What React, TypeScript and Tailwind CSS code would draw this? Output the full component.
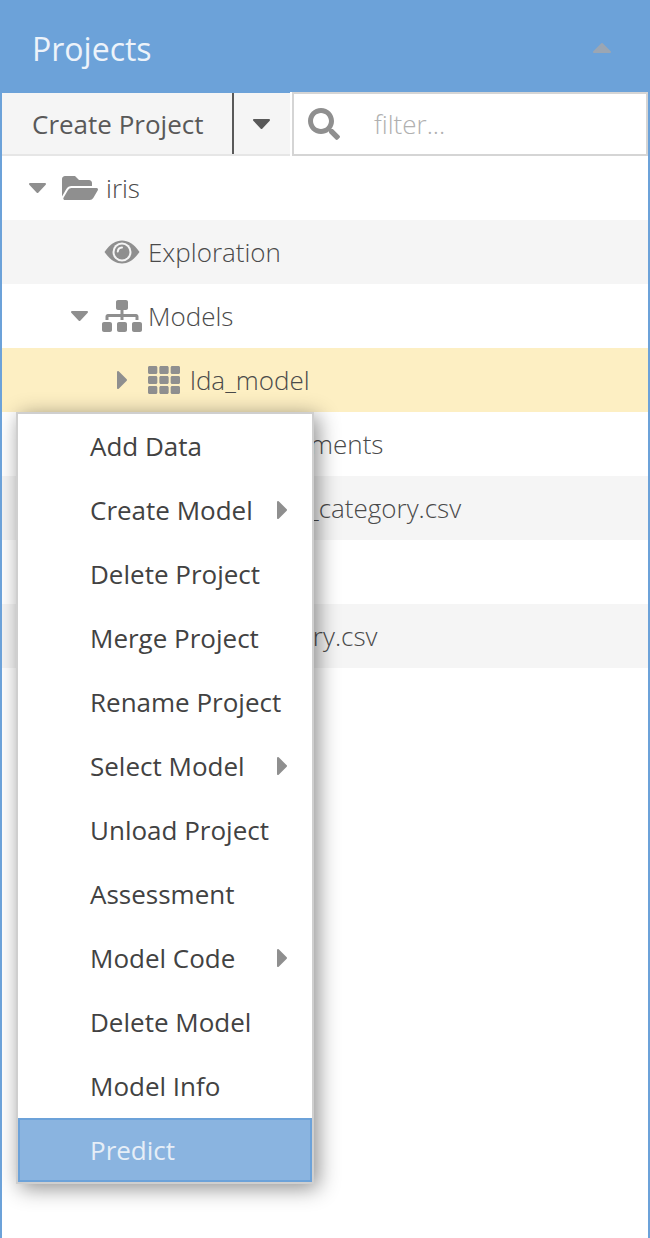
import React from "react";
import { FaFolderOpen, FaSearch, FaSitemap, FaTh } from "react-icons/fa";

function CaretDown({ className }: { className?: string }) {
  return (
    <svg width="19" height="12" viewBox="0 0 19 12" className={`shrink-0 ${className ?? ""}`}>
      <polygon points="2,2 17,2 9.5,10" fill="currentColor" stroke="currentColor" strokeWidth="2" strokeLinejoin="round" />
    </svg>
  );
}

function CaretRight({ className }: { className?: string }) {
  return (
    <svg width="12" height="20" viewBox="0 0 12 20" className={`shrink-0 ${className ?? ""}`}>
      <polygon points="2,2 10,10 2,18" fill="currentColor" stroke="currentColor" strokeWidth="2" strokeLinejoin="round" />
    </svg>
  );
}

// solid almond with a ringed pupil, the package eye is drawn differently
function EyeIcon({ className }: { className?: string }) {
  return (
    <svg width="36" height="24" viewBox="0 0 36 24" className={`shrink-0 ${className ?? ""}`}>
      <path d="M0.5 12C6 4 12 0.5 18 0.5S30 4 35.500 12C30 20 24 23.500 18 23.500S6 20 0.5 12Z" fill="currentColor" />
      <circle cx="18" cy="12" r="9.5" fill="#f5f5f5" />
      <circle cx="18" cy="12" r="7.5" fill="currentColor" />
      <path d="M13.800 11.500A4.500 4.500 0 0 1 18 7.500" fill="none" stroke="#f5f5f5" strokeWidth="2" strokeLinecap="round" />
    </svg>
  );
}

function TreeRow({
  pad,
  active,
  striped,
  children,
}: {
  pad: string;
  active?: boolean;
  striped?: boolean;
  children?: React.ReactNode;
}) {
  return (
    <div
      className={`flex h-16 items-center whitespace-nowrap text-[26px] font-light text-[#4a4a4a] ${pad} ${
        active ? "bg-[#fdefc3]" : striped ? "bg-[#f5f5f5]" : "bg-white"
      }`}
    >
      {children}
    </div>
  );
}

const menuItems = [
  { label: "Add Data" },
  { label: "Create Model", sub: true },
  { label: "Delete Project" },
  { label: "Merge Project" },
  { label: "Rename Project" },
  { label: "Select Model", sub: true },
  { label: "Unload Project" },
  { label: "Assessment" },
  { label: "Model Code", sub: true },
  { label: "Delete Model" },
  { label: "Model Info" },
];

export default function App() {
  return (
    <div className="relative h-[1238px] w-[650px] overflow-hidden border-x-2 border-[#6ca2d9] bg-white font-['Open_Sans',sans-serif]">
      {/* panel header */}
      <div className="flex h-[92px] items-center justify-between bg-[#6ca2d9] pl-[30px] pr-9">
        <span className="mt-[5px] text-[32px] text-[#edf3fa]">Projects</span>
        <svg width="20" height="12" viewBox="0 0 20 12" className="mt-1 text-[#9ba6b3]">
          <polygon points="2,10 18,10 10,2" fill="currentColor" stroke="currentColor" strokeWidth="2" strokeLinejoin="round" />
        </svg>
      </div>

      {/* toolbar */}
      <div className="flex h-16 text-[26px]">
        <div className="flex w-[288px] border-t border-b-2 border-t-[#6ca2d9] border-b-[#e6e6e6] bg-[#f5f5f5] text-[#595959]">
          <div className="flex w-[232px] items-center border-r-2 border-[#595959] pl-[30px] pt-0.5">Create Project</div>
          <div className="flex flex-1 items-center justify-center pr-px">
            <CaretDown />
          </div>
        </div>
        <div className="ml-0.5 flex flex-1 items-center border-2 border-[#d5d5d5] bg-white">
          <FaSearch className="ml-[14px] text-[32px] text-[#8f8f8f]" />
          <span className="ml-[34px] font-light text-[#b0b0b0]">filter...</span>
        </div>
      </div>

      {/* project tree */}
      <TreeRow pad="pl-[26px]">
        <CaretDown className="text-[#8f8f8f]" />
        <FaFolderOpen className="ml-[15px] text-[36px] text-[#8f8f8f]" />
        <span className="ml-[8px]">iris</span>
      </TreeRow>
      <TreeRow pad="pl-[102px]" striped>
        <EyeIcon className="text-[#8f8f8f]" />
        <span className="ml-[8px]">Exploration</span>
      </TreeRow>
      <TreeRow pad="pl-[68px]">
        <CaretDown className="text-[#8f8f8f]" />
        <FaSitemap className="ml-[13px] text-[40px] text-[#8f8f8f]" />
        <span className="ml-[6px]">Models</span>
      </TreeRow>
      <TreeRow pad="pl-[114px]" active>
        <CaretRight className="text-[#8f8f8f]" />
        <FaTh className="ml-[20px] text-[32px] text-[#8f8f8f]" />
        <span className="ml-[10px]">lda_model</span>
      </TreeRow>
      <TreeRow pad="pl-[235px]">Experiments</TreeRow>
      <TreeRow pad="pl-[272px]" striped>
        iris_category.csv
      </TreeRow>
      <TreeRow pad="pl-[148px]" />
      <TreeRow pad="pl-[233px]" striped>
        category.csv
      </TreeRow>

      {/* context menu */}
      <div className="absolute left-[14px] top-[412px] w-[298px] border-2 border-[#cfcfcf] bg-white text-[26px] text-[#424242] shadow-[4px_4px_20px_rgba(0,0,0,0.45)]">
        {menuItems.map((item) => (
          <div key={item.label} className="flex h-16 items-center justify-between pl-[72px] pr-[24px]">
            <span>{item.label}</span>
            {item.sub && <CaretRight className="text-[#8f8f8f]" />}
          </div>
        ))}
        <div className="flex h-16 items-center border-2 border-[#6ca2d9] bg-[#8ab4e0] pl-[70px] text-[#e6eef7]">Predict</div>
      </div>
    </div>
  );
}
